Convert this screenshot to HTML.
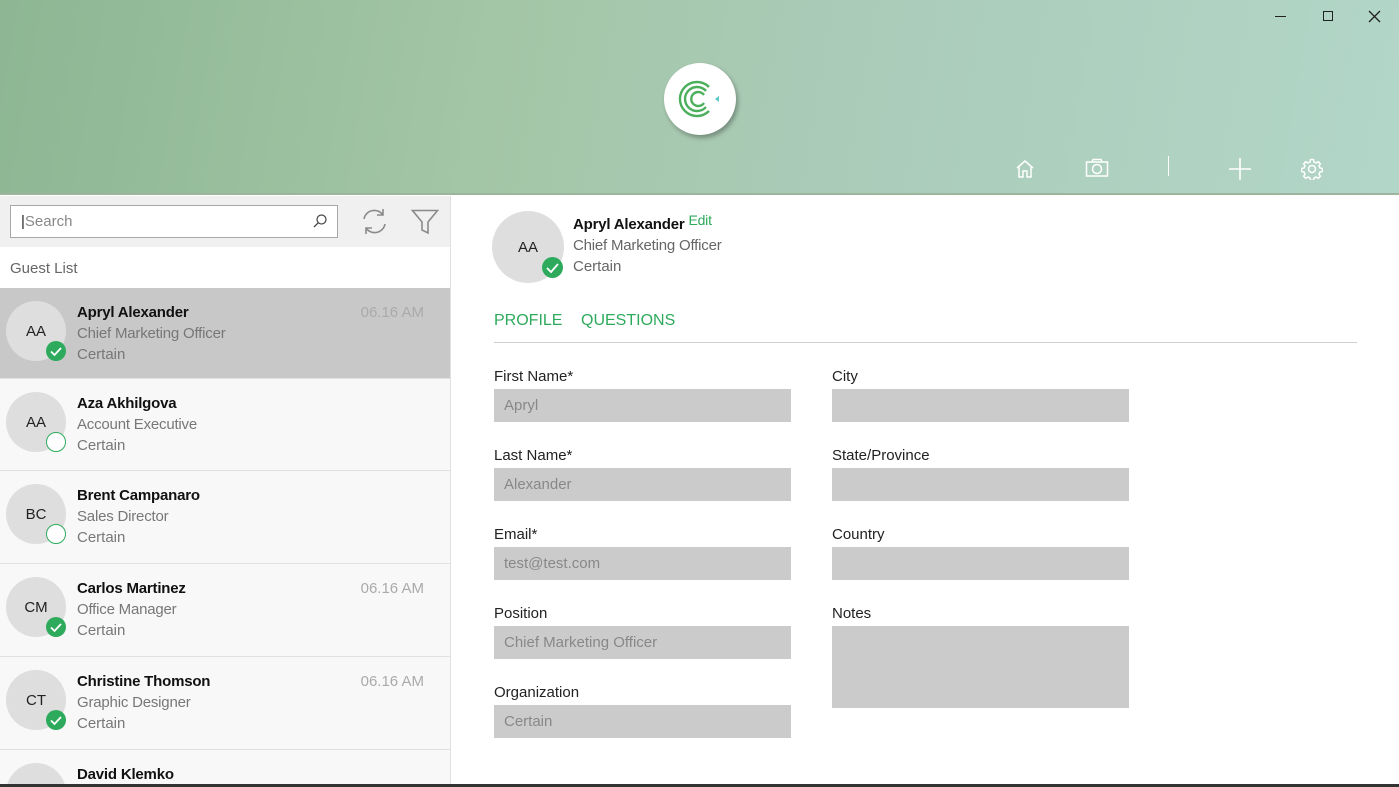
<!DOCTYPE html>
<html><head><meta charset="utf-8"><style>
*{box-sizing:border-box;margin:0;padding:0}
html,body{width:1399px;height:787px;overflow:hidden}
body{font-family:"Liberation Sans",sans-serif;background:#fff;position:relative}
.hdr{position:absolute;left:0;top:0;width:1399px;height:195px;background:linear-gradient(100deg,#8db693 0%,#a3c6a6 35%,#aacbb8 60%,#b2d6c8 100%)}
.hdr:after{content:"";position:absolute;left:0;right:0;bottom:0;height:2px;background:#9cb59c}
.logo{position:absolute;left:664px;top:63px;width:72px;height:72px;border-radius:50%;background:#fff;box-shadow:2px 3px 5px rgba(0,0,0,.3)}
.ab{position:absolute}
.left{position:absolute;left:0;top:196px;width:451px;height:588px;background:#f8f8f8;border-right:1px solid #e0e0e0}
.sbar{position:absolute;left:0;top:0;width:450px;height:51px;background:#f0f0f0}
.search{position:absolute;left:10px;top:9px;width:328px;height:33px;border:1px solid #a8a8a8;background:#fff;font-size:15px;color:#888;padding:7px 10px}
.gl{position:absolute;left:0;top:51px;width:450px;height:41px;background:#fff;font-size:15px;color:#666;padding:13px 10px}
.row{position:absolute;left:0;width:450px;height:92px;border-bottom:1px solid #e0e0e0}
.av{position:absolute;left:6px;top:13px;width:60px;height:60px;border-radius:50%;background:#dedede;font-size:15px;color:#222;text-align:center;line-height:62px}
.ck{position:absolute;left:46px;top:53px;width:20px;height:20px;border-radius:50%}
.nm{position:absolute;left:77px;top:16px;font-size:15px;font-weight:bold;color:#111;letter-spacing:-.2px}
.t2{position:absolute;left:77px;top:37px;font-size:15px;color:#777;letter-spacing:-.2px}
.t3{position:absolute;left:77px;top:58px;font-size:15px;color:#777}
.tm{position:absolute;right:26px;top:16px;font-size:15px;color:#aaa}
.lbl{position:absolute;font-size:15px;color:#222;margin-top:2px}
.inp{position:absolute;width:297px;height:33px;background:#cbcbcb;font-size:15px;color:#888;padding:8px 10px}
</style></head><body>
<div class="hdr">
 <div class="logo"><svg width="72" height="72" viewBox="0 0 72 72">
  <g fill="none" stroke="#4caf5c" stroke-width="2.4">
   <path d="M45 24 A17 17 0 1 0 45 48"/>
   <path d="M42 28 A12 12 0 1 0 42 44"/>
   <path d="M40 32 A7 7 0 1 0 40 40"/>
  </g>
  <path d="M55 33 L51 36 L55 39 Z" fill="#5cc7c7"/>
 </svg></div>
 <div class="ab" style="left:1275px;top:16px;width:11px;height:1px;background:#222"></div>
 <div class="ab" style="left:1323px;top:11px;width:10px;height:10px;border:1px solid #222"></div>
 <svg class="ab" style="left:1368px;top:10px" width="13" height="13"><path d="M1 1L12 12M12 1L1 12" stroke="#222" stroke-width="1.3"/></svg>
 <svg class="ab" style="left:1014px;top:159px" width="22" height="20" viewBox="0 0 22 20"><path d="M3 9 L11 2 L19 9 M5 7 V18 H9 V12 H13 V18 H17 V7" fill="none" stroke="#fff" stroke-width="1.5"/></svg>
 <svg class="ab" style="left:1085px;top:158px" width="24" height="20" viewBox="0 0 24 20"><rect x="1.5" y="4" width="21" height="14" fill="none" stroke="#fff" stroke-width="1.5"/><path d="M7 4 L8 1.5 H16 L17 4" fill="none" stroke="#fff" stroke-width="1.5"/><circle cx="12" cy="11" r="4.5" fill="none" stroke="#fff" stroke-width="1.5"/></svg>
 <div class="ab" style="left:1168px;top:156px;width:1px;height:20px;background:#fff"></div>
 <svg class="ab" style="left:1229px;top:158px" width="22" height="22"><path d="M11 0V22M0 11H22" stroke="#fff" stroke-width="1.6"/></svg>
 <svg class="ab" style="left:1301px;top:158px" width="22" height="22" viewBox="0 0 22 22"><g fill="none" stroke="#fff" stroke-width="1.5"><circle cx="11" cy="11" r="3.5"/><path d="M9.5 1.5h3l.5 2.5 2 1 2.3-1.3 2 2-1.3 2.3 1 2 2.5.5v3l-2.5.5-1 2 1.3 2.3-2 2-2.3-1.3-2 1-.5 2.5h-3l-.5-2.5-2-1-2.3 1.3-2-2 1.3-2.3-1-2-2.5-.5v-3l2.5-.5 1-2-1.3-2.3 2-2 2.3 1.3 2-1z"/></g></svg>
</div>

<div class="left">
 <div class="sbar">
  <div class="search"><span style="color:#222">|</span>Search</div>
  <svg class="ab" style="left:312px;top:17px" width="16" height="16"><circle cx="9.5" cy="6.5" r="4.5" fill="none" stroke="#444" stroke-width="1.2"/><path d="M6.3 9.7L2 14" stroke="#444" stroke-width="1.3"/></svg>
  <svg class="ab" style="left:360px;top:11px" width="29" height="29" viewBox="0 0 29 29"><g fill="none" stroke="#8a8a8a" stroke-width="1.6"><path d="M4 12 A10.5 10.5 0 0 1 23 8"/><path d="M25 17 A10.5 10.5 0 0 1 6 21"/><path d="M23 2V8H17"/><path d="M6 27V21H12"/></g></svg>
  <svg class="ab" style="left:411px;top:13px" width="28" height="26" viewBox="0 0 28 26"><path d="M1.5 1.5H26.5L17 13V24L11 21V13Z" fill="none" stroke="#8a8a8a" stroke-width="1.6"/></svg>
 </div>
 <div class="gl">Guest List</div>
</div>

<div style="position:absolute;left:0;top:196px;width:451px;height:588px;overflow:hidden">
 <div class="row" style="top:92px;background:#c8c8c8;height:90px;border:none"><div class="av">AA</div><div class="ck" style="background:#2eaa5c"><svg width="20" height="20"><path d="M5 10.5L8.5 14L15 7" fill="none" stroke="#fff" stroke-width="1.8"/></svg></div><div class="nm">Apryl Alexander</div><div class="t2">Chief Marketing Officer</div><div class="t3">Certain</div><div class="tm">06.16 AM</div></div>
 <div class="row" style="top:182px;height:93px;border-top:1px solid #e0e0e0"><div class="av">AA</div><div class="ck" style="border:1.5px solid #2eaa5c;background:#fff"></div><div class="nm">Aza Akhilgova</div><div class="t2">Account Executive</div><div class="t3">Certain</div></div>
 <div class="row" style="top:275px;height:93px"><div class="av">BC</div><div class="ck" style="border:1.5px solid #2eaa5c;background:#fff"></div><div class="nm">Brent Campanaro</div><div class="t2">Sales Director</div><div class="t3">Certain</div></div>
 <div class="row" style="top:368px;height:93px"><div class="av">CM</div><div class="ck" style="background:#2eaa5c"><svg width="20" height="20"><path d="M5 10.5L8.5 14L15 7" fill="none" stroke="#fff" stroke-width="1.8"/></svg></div><div class="nm">Carlos Martinez</div><div class="t2">Office Manager</div><div class="t3">Certain</div><div class="tm">06.16 AM</div></div>
 <div class="row" style="top:461px;height:93px"><div class="av">CT</div><div class="ck" style="background:#2eaa5c"><svg width="20" height="20"><path d="M5 10.5L8.5 14L15 7" fill="none" stroke="#fff" stroke-width="1.8"/></svg></div><div class="nm">Christine Thomson</div><div class="t2">Graphic Designer</div><div class="t3">Certain</div><div class="tm">06.16 AM</div></div>
 <div class="row" style="top:554px;height:34px;border:none;overflow:hidden"><div class="av">DK</div><div class="nm">David Klemko</div></div>
 <div style="position:absolute;right:0;top:0;width:1px;height:588px;background:#e0e0e0"></div>
</div>

<div class="ab" style="left:492px;top:211px;width:72px;height:72px;border-radius:50%;background:#dedede;text-align:center;line-height:74px;font-size:15px;color:#222">AA</div>
<div class="ab" style="left:542px;top:257px;width:21px;height:21px;border-radius:50%;background:#2eaa5c"><svg width="21" height="21"><path d="M5 11L9 15L16 7" fill="none" stroke="#fff" stroke-width="1.8"/></svg></div>
<div class="ab" style="left:573px;top:216px;font-size:15px;font-weight:bold;color:#111;letter-spacing:-.2px">Apryl Alexander <span style="font-weight:normal;color:#2eaa5c;font-size:14px;position:relative;top:-4px">Edit</span></div>
<div class="ab" style="left:573px;top:237px;font-size:15px;color:#666;letter-spacing:-.2px">Chief Marketing Officer</div>
<div class="ab" style="left:573px;top:258px;font-size:15px;color:#666">Certain</div>
<div class="ab" style="left:494px;top:312px;font-size:16px;color:#2eaa5c">PROFILE</div>
<div class="ab" style="left:581px;top:312px;font-size:16px;color:#2eaa5c">QUESTIONS</div>
<div class="ab" style="left:494px;top:342px;width:863px;height:1px;background:#d0d0d0"></div>

<div class="lbl" style="left:494px;top:366px">First Name*</div><div class="inp" style="left:494px;top:389px">Apryl</div>
<div class="lbl" style="left:494px;top:445px">Last Name*</div><div class="inp" style="left:494px;top:468px">Alexander</div>
<div class="lbl" style="left:494px;top:524px">Email*</div><div class="inp" style="left:494px;top:547px">test@test.com</div>
<div class="lbl" style="left:494px;top:603px">Position</div><div class="inp" style="left:494px;top:626px">Chief Marketing Officer</div>
<div class="lbl" style="left:494px;top:682px">Organization</div><div class="inp" style="left:494px;top:705px">Certain</div>
<div class="lbl" style="left:832px;top:366px">City</div><div class="inp" style="left:832px;top:389px"></div>
<div class="lbl" style="left:832px;top:445px">State/Province</div><div class="inp" style="left:832px;top:468px"></div>
<div class="lbl" style="left:832px;top:524px">Country</div><div class="inp" style="left:832px;top:547px"></div>
<div class="lbl" style="left:832px;top:603px">Notes</div><div class="inp" style="left:832px;top:626px;height:82px"></div>

<div class="ab" style="left:0;top:784px;width:1399px;height:3px;background:#333"></div>
</body></html>
